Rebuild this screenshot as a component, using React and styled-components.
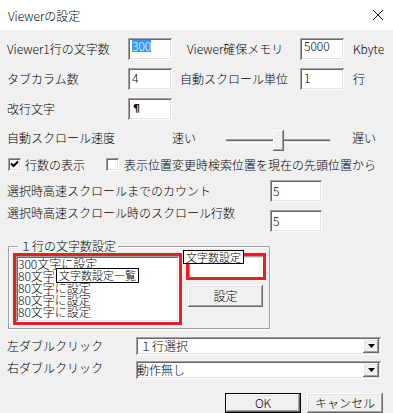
import React from 'react';
import styled, { createGlobalStyle } from 'styled-components';

const Global = createGlobalStyle`
  html, body { margin: 0; padding: 0; background: #f0f0f0; }
  body { font-family: "Noto Sans CJK JP", "Noto Sans", sans-serif; font-size: 12px; font-weight: 300; color: #000; }
  * { box-sizing: border-box; }
`;

const sunken = 'inset 1px 1px 0 #a0a0a0, inset -1px -1px 0 #fff, inset 2px 2px 0 #696969, inset -2px -2px 0 #e3e3e3';
const raised = 'inset -1px -1px 0 #696969, inset 1px 1px 0 #fff, inset -2px -2px 0 #a0a0a0, inset 2px 2px 0 #e3e3e3';

const Window = styled.div`
  width: 393px;
  height: 413px;
  background: #f0f0f0;
  overflow: hidden;
  display: flex;
  flex-direction: column;
`;

const TitleBar = styled.div`
  flex: none;
  height: 30px;
  background: #fff;
  display: flex;
  align-items: center;
  justify-content: space-between;
  padding: 0 9px 0 8px;
  font-size: 12px;
`;

const Body = styled.div`
  flex: 1;
  display: flex;
  flex-direction: column;
  padding: 0 0 0 7px;
`;

const Row = styled.div`
  display: flex;
  align-items: ${p => p.$align || 'center'};
  height: ${p => p.$h || 22}px;
  margin-top: ${p => p.$mt || 0}px;
  flex: none;
`;

const Label = styled.span`
  flex: none;
  width: ${p => (p.$w ? `${p.$w}px` : 'auto')};
  padding-left: ${p => p.$pl || 0}px;
  margin-left: ${p => p.$ml || 0}px;
  margin-top: ${p => p.$mt || 0}px;
  line-height: 16px;
  white-space: nowrap;
`;

const Edit = styled.div`
  flex: none;
  width: ${p => p.$w}px;
  height: 22px;
  background: #fff;
  box-shadow: ${sunken};
  padding: ${p => p.$pt ?? 2}px 0 0 ${p => p.$pl ?? 4}px;
  line-height: 12px;
  white-space: nowrap;
`;

const Pilcrow = styled.span`
  font-family: "DejaVu Sans", sans-serif;
  font-weight: 700;
  font-size: 11px;
  color: #000;
`;

const Selected = styled.span`
  display: inline-block;
  height: 12px;
  line-height: 12px;
  background: #3399ff;
  color: #fff;
`;

const Track = styled.div`
  position: relative;
  flex: none;
  width: 104px;
  height: 22px;
  display: flex;
  align-items: center;
`;

const TrackLine = styled.div`
  width: 100%;
  height: 4px;
  border-top: 1px solid #a0a0a0;
  border-bottom: 1px solid #fff;
  background: #696969;
  box-shadow: inset 0 -1px 0 #e3e3e3;
  margin-top: 1px;
`;

const Thumb = styled.div`
  position: absolute;
  top: 1px;
  width: 11px;
  height: 21px;
  background: #f0f0f0;
  box-shadow: inset -1px -1px 0 #696969, inset 1px 1px 0 #fff, inset -2px -2px 0 #a0a0a0;
`;

const CheckBox = styled.div`
  flex: none;
  width: 13px;
  height: 13px;
  margin-left: ${p => p.$ml || 0}px;
  background: #fff;
  box-shadow: ${sunken};
  display: flex;
  align-items: center;
  justify-content: center;
`;

const GroupBox = styled.div`
  position: relative;
  flex: none;
  margin: 14px 0 0 1px;
  width: 262px;
  height: 83px;
  border: 1px solid #a0a0a0;
  box-shadow: inset 1px 1px 0 #fff, 1px 1px 0 #fff;
  display: flex;
  align-items: flex-start;
  padding: 6px 0 0 4px;
`;

const Legend = styled.span`
  position: absolute;
  top: -8px;
  left: 9px;
  padding: 0 2px;
  background: #f0f0f0;
  line-height: 14px;
  white-space: nowrap;
`;

const RedFrame = styled.div`
  position: relative;
  flex: none;
  width: ${p => p.$w}px;
  height: ${p => p.$h}px;
  border: 3px solid #ed1c24;
  margin-top: ${p => p.$mt || 0}px;
`;

const ListBox = styled.div`
  width: 100%;
  height: 100%;
  background: #fff;
  box-shadow: ${sunken};
  padding: 2px 0 0 2px;
  display: flex;
  flex-direction: column;
`;

const ListItem = styled.div`
  height: 12px;
  line-height: 12px;
  white-space: nowrap;
`;

const InnerEdit = styled.div`
  width: 100%;
  height: 100%;
  background: #fff;
  box-shadow: inset 1px 1px 0 #a0a0a0, inset -1px -1px 0 #fff, inset 2px 2px 0 #e3e3e3;
`;

const Tag = styled.div`
  position: absolute;
  left: ${p => p.$x}px;
  top: ${p => p.$y}px;
  height: ${p => p.$h}px;
  background: #fff;
  border: 1px solid #000;
  padding: 0 2px;
  font-size: 11px;
  line-height: ${p => p.$h - 2}px;
  white-space: nowrap;
`;

const RightCol = styled.div`
  flex: none;
  display: flex;
  flex-direction: column;
  align-items: flex-start;
  margin-left: 4px;
`;

const Button = styled.div`
  flex: none;
  width: ${p => p.$w}px;
  height: ${p => p.$h}px;
  margin-left: ${p => p.$ml || 0}px;
  margin-top: ${p => p.$mt || 0}px;
  background: #f0f0f0;
  box-shadow: ${raised};
  border: ${p => (p.$default ? '1px solid #000' : 'none')};
  display: flex;
  align-items: center;
  justify-content: center;
  line-height: 14px;
  white-space: nowrap;
`;

const Combo = styled.div`
  flex: none;
  width: 245px;
  height: 18px;
  background: #fff;
  box-shadow: ${sunken};
  padding: 2px 2px 2px ${p => p.$pl ?? 2}px;
  display: flex;
  align-items: center;
  justify-content: space-between;
  line-height: 14px;
`;

const DropButton = styled.div`
  flex: none;
  width: 16px;
  height: 14px;
  background: #f0f0f0;
  box-shadow: ${raised};
  display: flex;
  align-items: center;
  justify-content: center;
`;

const ButtonRow = styled.div`
  display: flex;
  justify-content: flex-end;
  margin-top: 11px;
  padding-right: 10px;
  flex: none;
`;

const CloseIcon = () => (
  <svg width="12" height="12" viewBox="0 0 12 12">
    <path d="M1 1 L11 11 M11 1 L1 11" stroke="#000" strokeWidth="1" fill="none" />
  </svg>
);

const CheckMark = () => (
  <svg width="9" height="9" viewBox="0 0 9 9">
    <path d="M1 3.5 L3.5 6 L8 1.5" stroke="#000" strokeWidth="2" fill="none" />
  </svg>
);

const DownArrow = () => (
  <svg width="7" height="4" viewBox="0 0 7 4">
    <path d="M0 0 H7 L3.5 4 Z" fill="#000" />
  </svg>
);

const listItems = ['300文字に設定', '80文字に設定', '80文字に設定', '80文字に設定', '80文字に設定'];

export default function App() {
  return (
    <>
      <Global />
      <Window>
        <TitleBar>
          <span>Viewerの設定</span>
          <CloseIcon />
        </TitleBar>
        <Body>
          <Row $mt={8}>
            <Label $w={121}>Viewer1行の文字数</Label>
            <Edit $w={44}><Selected>300</Selected></Edit>
            <Label $w={128} $pl={15}>Viewer確保メモリ</Label>
            <Edit $w={44}>5000</Edit>
            <Label $ml={9}>Kbyte</Label>
          </Row>
          <Row $mt={8}>
            <Label $w={121}>タブカラム数</Label>
            <Edit $w={44} $pt={4}>4</Edit>
            <Label $w={128} $pl={8}>自動スクロール単位</Label>
            <Edit $w={44} $pt={4}>1</Edit>
            <Label $ml={9}>行</Label>
          </Row>
          <Row $mt={8}>
            <Label $w={121}>改行文字</Label>
            <Edit $w={44} $pl={5} $pt={3}><Pilcrow>¶</Pilcrow></Edit>
          </Row>
          <Row $mt={9} $align="flex-start">
            <Label $w={165} $mt={1}>自動スクロール速度</Label>
            <Label $w={54} $mt={1}>速い</Label>
            <Track>
              <TrackLine />
              <Thumb style={{ left: 47 }} />
            </Track>
            <Label $ml={22} $mt={1}>遅い</Label>
          </Row>
          <Row $mt={7} $h={13}>
            <CheckBox $ml={1}><CheckMark /></CheckBox>
            <Label $ml={4}>行数の表示</Label>
            <CheckBox $ml={21} />
            <Label $ml={5}>表示位置変更時検索位置を現在の先頭位置から</Label>
          </Row>
          <Row $mt={9}>
            <Label $w={263}>選択時高速スクロールまでのカウント</Label>
            <Edit $w={52} $pl={3} $pt={5}>5</Edit>
          </Row>
          <Row $mt={8} $align="flex-start">
            <Label $w={263} $mt={-5}>選択時高速スクロール時のスクロール行数</Label>
            <Edit $w={52} $pl={3} $pt={5}>5</Edit>
          </Row>
          <GroupBox>
            <Legend>１行の文字数設定</Legend>
            <RedFrame $w={169} $h={72}>
              <ListBox>
                {listItems.map((t, i) => (
                  <ListItem key={i}>{t}</ListItem>
                ))}
              </ListBox>
              <Tag $x={40} $y={12} $h={15}>文字数設定一覧</Tag>
            </RedFrame>
            <RightCol>
              <RedFrame $w={80} $h={27}>
                <InnerEdit />
                <Tag $x={-6} $y={-6} $h={14}>文字数設定</Tag>
              </RedFrame>
              <Button $w={75} $h={22} $ml={2} $mt={5}>設定</Button>
            </RightCol>
          </GroupBox>
          <Row $mt={8} $h={18}>
            <Label $w={129}>左ダブルクリック</Label>
            <Combo $pl={4}>
              <span>１行選択</span>
              <DropButton><DownArrow /></DropButton>
            </Combo>
          </Row>
          <Row $mt={6} $h={18} $align="flex-start">
            <Label $w={129} $mt={-1}>右ダブルクリック</Label>
            <Combo $pl={1}>
              <span>動作無し</span>
              <DropButton><DownArrow /></DropButton>
            </Combo>
          </Row>
        </Body>
        <ButtonRow>
          <Button $w={76} $h={20} $default>OK</Button>
          <Button $w={76} $h={20} $ml={6}>キャンセル</Button>
        </ButtonRow>
      </Window>
    </>
  );
}
